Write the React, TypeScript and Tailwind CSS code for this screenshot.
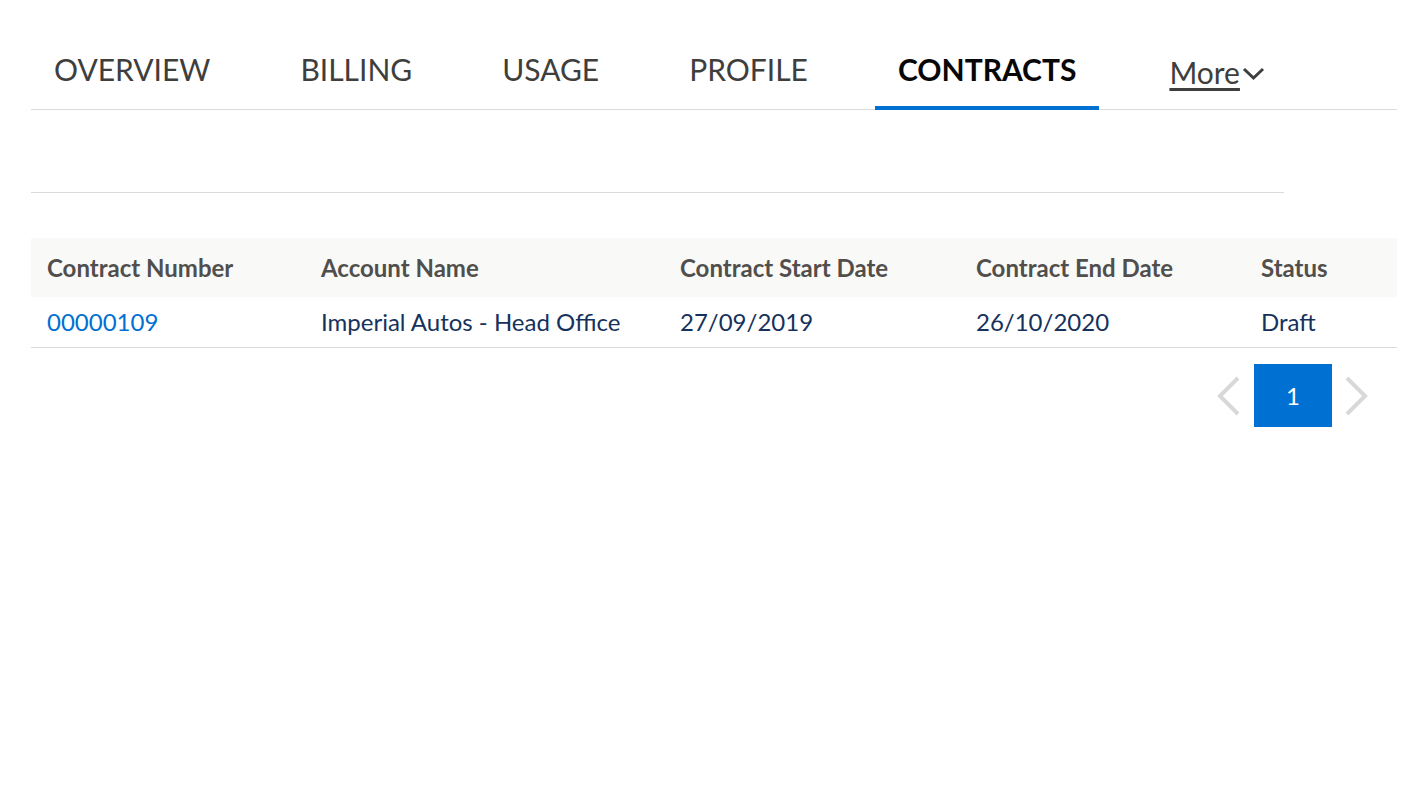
const tabs = ["OVERVIEW", "BILLING", "USAGE", "PROFILE", "CONTRACTS"];

const columns = [
  { label: "Contract Number", width: "w-[274px]" },
  { label: "Account Name", width: "w-[359px]" },
  { label: "Contract Start Date", width: "w-[296px]" },
  { label: "Contract End Date", width: "w-[285px]" },
  { label: "Status", width: "flex-1" },
];

export default function App() {
  const active = "CONTRACTS";

  return (
    <div className="min-h-screen bg-white font-['Lato','Liberation_Sans',sans-serif] pt-[50px] pl-[31px] pr-[15px]">
      {/* Tabs */}
      <div className="flex items-end gap-[44px] border-b border-[#dddbda]">
        {tabs.map((tab) => (
          <div
            key={tab}
            className={`px-[23px] pb-[18px] text-[30px] leading-[38px] border-b-4 -mb-px ${
              tab === active ? "border-[#0070d2] text-[#080707] font-bold" : "border-transparent text-[#3e3e3c]"
            }`}
          >
            {tab}
          </div>
        ))}
        <div className="flex items-center pl-[26px] pb-[18px] text-[30px] leading-[38px] text-[#3e3e3c]">
          <span className="underline decoration-[3px] underline-offset-[4px]">More</span>
          <svg width="23" height="14" viewBox="0 0 23 14" className="ml-[2px] mt-[4px]" fill="none">
            <path d="M2 2 L11.5 11 L21 2" stroke="#3e3e3c" strokeWidth="3" />
          </svg>
        </div>
      </div>

      <div className="h-[82px]" />
      <div className="w-[1253px] border-t border-[#dddbda]" />
      <div className="h-[45px]" />

      {/* Table */}
      <div className="text-[24px]">
        <div className="flex bg-[#f9f9f7] h-[59px] items-center font-bold text-[#514f4d]">
          {columns.map((c) => (
            <div key={c.label} className={`${c.width} px-[16px] whitespace-nowrap`}>
              {c.label}
            </div>
          ))}
        </div>
        <div className="flex h-[51px] items-center border-b border-[#dddbda] text-[#16325c]">
          <div className="w-[274px] px-[16px] text-[#0070d2]">00000109</div>
          <div className="w-[359px] px-[16px] whitespace-nowrap">Imperial Autos - Head Office</div>
          <div className="w-[296px] px-[16px]">27/09/2019</div>
          <div className="w-[285px] px-[16px]">26/10/2020</div>
          <div className="flex-1 px-[16px]">Draft</div>
        </div>
      </div>

      {/* Pagination */}
      <div className="flex justify-end items-center pr-[28px] mt-[16px]">
        <svg width="26" height="40" viewBox="0 0 26 40" fill="none" className="mr-[12px]">
          <path d="M22 2 L4 20 L22 38" stroke="#d8d8d8" strokeWidth="4" />
        </svg>
        <div className="w-[78px] h-[63px] bg-[#0070d2] text-white text-[24px] flex items-center justify-center">
          1
        </div>
        <svg width="26" height="40" viewBox="0 0 26 40" fill="none" className="ml-[11px]">
          <path d="M4 2 L22 20 L4 38" stroke="#d8d8d8" strokeWidth="4" />
        </svg>
      </div>
    </div>
  );
}
